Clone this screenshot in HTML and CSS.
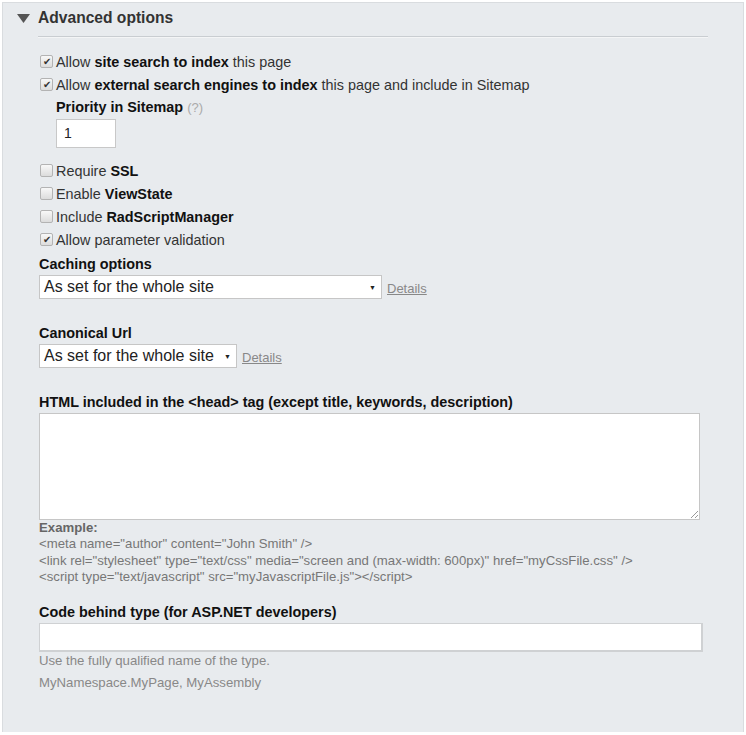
FILE: index.html
```html
<!DOCTYPE html>
<html>
<head>
<meta charset="utf-8">
<link rel="stylesheet" href="styles.css">
</head>
<body>
<div class="panel">
  <div class="header">
    <svg class="tri" width="13" height="11" viewBox="0 0 13 11"><polygon points="0,1 13,1 6.5,10" fill="#555"/></svg>
    <span class="title">Advanced options</span>
  </div>
  <div class="rule"></div>
  <div class="content">
    <div class="check-row"><span class="cb checked">&#10004;</span><span>Allow <b>site search to index</b> this page</span></div>
    <div class="check-row"><span class="cb checked">&#10004;</span><span>Allow <b>external search engines to index</b> this page and include in Sitemap</span></div>
    <div class="priority">
      <div class="plabel"><b>Priority in Sitemap</b> <span class="help">(?)</span></div>
      <div class="pinput">1</div>
    </div>
    <div class="group2">
      <div class="check-row"><span class="cb"></span><span>Require <b>SSL</b></span></div>
      <div class="check-row"><span class="cb"></span><span>Enable <b>ViewState</b></span></div>
      <div class="check-row"><span class="cb"></span><span>Include <b>RadScriptManager</b></span></div>
      <div class="check-row"><span class="cb checked">&#10004;</span><span>Allow parameter validation</span></div>
    </div>
    <div class="label">Caching options</div>
    <div class="select-row">
      <div class="select wide"><span>As set for the whole site</span><span class="arrow">&#9660;</span></div>
      <a class="details">Details</a>
    </div>
    <div class="label gap">Canonical Url</div>
    <div class="select-row">
      <div class="select narrow"><span>As set for the whole site</span><span class="arrow">&#9660;</span></div>
      <a class="details">Details</a>
    </div>
    <div class="label gap">HTML included in the &lt;head&gt; tag (except title, keywords, description)</div>
    <div class="textarea"><span class="grip"></span></div>
    <div class="example">
      <div class="ex-title">Example:</div>
      <div>&lt;meta name="author" content="John Smith" /&gt;</div>
      <div>&lt;link rel="stylesheet" type="text/css" media="screen and (max-width: 600px)" href="myCssFile.css" /&gt;</div>
      <div>&lt;script type="text/javascript" src="myJavascriptFile.js"&gt;&lt;/script&gt;</div>
    </div>
    <div class="label gap2">Code behind type (for ASP.NET developers)</div>
    <div class="textinput"></div>
    <div class="note">Use the fully qualified name of the type.</div>
    <div class="note note2">MyNamespace.MyPage, MyAssembly</div>
  </div>
</div>
</body>
</html>
```

FILE: styles.css
```css
html, body {
  margin: 0;
  padding: 0;
  background: #ffffff;
}
body {
  font-family: "Liberation Sans", Arial, sans-serif;
  color: #222;
  font-size: 14.4px;
}
.panel {
  margin: 2px 2px 0 2px;
  height: 730px;
  box-sizing: border-box;
  background: #e8ebee;
  border: 1px solid #d9dcdf;
  border-bottom: none;
}
.header {
  display: flex;
  align-items: center;
  height: 20px;
  padding: 5px 0 0 14px;
}
.tri {
  display: block;
  margin-right: 8px;
}
.title {
  font-weight: bold;
  font-size: 15.6px;
  color: #333;
  line-height: 20px;
}
.rule {
  margin: 8px 35px 0 35px;
  height: 0;
  border-top: 1px solid #c9cdd1;
  border-bottom: 1px solid #f4f5f6;
}
.content {
  padding: 12px 0 0 36px;
}
.check-row {
  display: flex;
  align-items: center;
  height: 23px;
  color: #333;
}
.check-row b {
  color: #111;
}
.cb {
  width: 11px;
  height: 11px;
  border: 1px solid #b3b3b3;
  border-radius: 2px;
  background: linear-gradient(#f8f8f8, #dcdcdc);
  margin: 0 4px 0 1px;
  font-size: 10px;
  line-height: 11px;
  text-align: center;
  color: #333;
  flex: none;
}
.check-row > span:last-child {
  margin-left: -1px;
}
.priority {
  padding-left: 17px;
}
.plabel {
  line-height: 22px;
  color: #111;
}
.help {
  color: #aaa;
  font-size: 13px;
}
.pinput {
  width: 51px;
  height: 27px;
  background: #fff;
  border: 1px solid #c8c8c8;
  padding-left: 7px;
  line-height: 27px;
  font-size: 14px;
  color: #222;
}
.group2 {
  margin-top: 11px;
}
.label {
  font-weight: bold;
  line-height: 22px;
  color: #111;
  margin-top: 2px;
}
.label.gap {
  margin-top: 23px;
}
.label.gap2 {
  margin-top: 16px;
}
.select-row {
  display: flex;
  align-items: center;
}
.select {
  height: 22px;
  background: #fff;
  border: 1px solid #c6c6c6;
  display: flex;
  align-items: center;
  justify-content: space-between;
  padding: 0 5px 0 4px;
  font-size: 16px;
  color: #222;
  box-sizing: content-box;
}
.select.wide {
  width: 332px;
}
.select.narrow {
  width: 187px;
}
.arrow {
  font-size: 7px;
  color: #222;
}
.details {
  font-size: 13px;
  color: #888;
  text-decoration: underline;
  margin-left: 5px;
  padding-top: 2px;
}
.textarea {
  margin-top: 0;
  width: 659px;
  height: 105px;
  background: #fff;
  border: 1px solid #c6c6c6;
  position: relative;
}
.grip {
  position: absolute;
  right: 1px;
  bottom: 1px;
  width: 7px;
  height: 7px;
  background: linear-gradient(135deg, transparent 45%, #999 45%, #999 55%, transparent 55%, transparent 72%, #999 72%, #999 82%, transparent 82%);
}
.example {
  font-size: 13.2px;
  line-height: 16.3px;
  color: #777;
}
.ex-title {
  font-weight: bold;
  color: #666;
}
.textinput {
  width: 661px;
  height: 26px;
  background: #fff;
  border-style: solid;
  border-width: 1px 2px 2px 1px;
  border-color: #cfd1d3;
}
.note {
  font-size: 13.2px;
  line-height: 18px;
  color: #888;
}
.note2 {
  margin-top: 4px;
}
```
